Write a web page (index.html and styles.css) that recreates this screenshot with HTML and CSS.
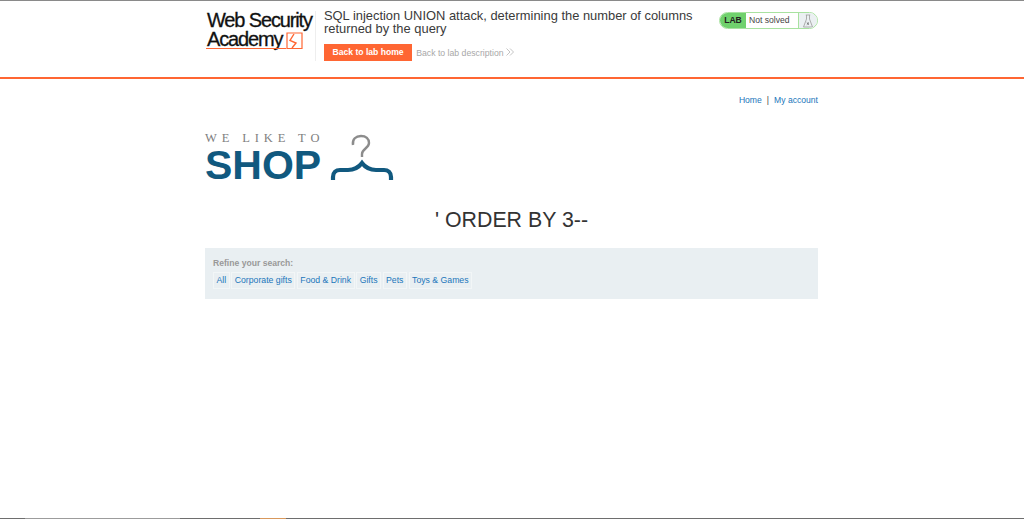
FILE: index.html
```html
<!DOCTYPE html>
<html lang="en">
<head>
    <meta charset="UTF-8">
    <meta name="viewport" content="width=device-width, initial-scale=1.0">
    <title>SQL injection UNION attack</title>
    <link rel="stylesheet" href="styles.css">
</head>
<body>
    <!-- Lab header -->
    <header class="lab-header">
        <div class="lab-inner">
            <div class="academy-logo">
                <span class="academy-line">Web Security</span>
                <span class="academy-line academy-second">Academy
                    <svg class="academy-mark" width="17" height="18" viewBox="0 0 17 18">
                        <path d="M1 2H16V17.500H1Z" fill="none" stroke="#ff6633" stroke-width="1.200"/>
                        <path d="M8 3L4 9.500L10 12L6 17" fill="none" stroke="#ff6633" stroke-width="1.400"/>
                    </svg>
                </span>
                <span class="academy-rule"></span>
            </div>
            <div class="lab-title">
                <h2>SQL injection UNION attack, determining the number of columns returned by the query</h2>
                <div class="lab-links">
                    <a class="lab-home" href="#home">Back to lab home</a>
                    <a class="lab-desc" href="#description">Back to lab description
                        <svg width="8" height="8" viewBox="0 0 8 8"><path d="M.5.5L4 4L.5 7.500M4 .5L7.500 4L4 7.500" fill="none" stroke="#c4c4c4"/></svg>
                    </a>
                </div>
            </div>
            <div class="lab-status">
                <span class="status-lab">LAB</span>
                <span class="status-text">Not solved</span>
                <span class="status-icon">
                    <svg width="10" height="14" viewBox="0 0 10 14">
                        <path d="M3.500 1V5L.5 13H9.500L6.500 5V1M2.800 1H7.200" fill="none" stroke="#a5a5a5" stroke-width=".9"/>
                        <path d="M3.800 8.500L6 10.700M6 8.500L3.800 10.700" fill="none" stroke="#666" stroke-width=".9"/>
                    </svg>
                </span>
            </div>
        </div>
    </header>

    <!-- Shop page -->
    <section class="shop">
        <nav class="account-nav">
            <a href="#home">Home</a><span class="nav-sep">|</span><a href="#account">My account</a>
        </nav>
        <div class="shop-logo">
            <div class="shop-words">
                <span class="shop-small">WE LIKE TO</span>
                <span class="shop-big">SHOP</span>
            </div>
            <svg class="hanger" width="66" height="50" viewBox="0 0 66 50">
                <path d="M23 12C22 6 26 3 31 3C36 3 39 6 39 10C39 15 32 16 32 21V24" fill="none" stroke="#8c8c8c" stroke-width="2.400"/>
                <path d="M3 47V44C3 39.500 6 37 10 37H18C25 37 29 34 32 30C35 34 39 37 46 37H54C58 37 61 39.500 61 44V47" fill="none" stroke="#11597f" stroke-width="4.200"/>
            </svg>
        </div>
        <h1 class="search-title">' ORDER BY 3--</h1>
        <div class="filters">
            <p class="filters-label">Refine your search:</p>
            <ul class="filter-list">
                <li><a href="#all">All</a></li>
                <li><a href="#corporate">Corporate gifts</a></li>
                <li><a href="#food">Food &amp; Drink</a></li>
                <li><a href="#gifts">Gifts</a></li>
                <li><a href="#pets">Pets</a></li>
                <li><a href="#toys">Toys &amp; Games</a></li>
            </ul>
        </div>
    </section>

    <!-- Window edge -->
    <div class="edge">
        <span class="edge-a"></span>
        <span class="edge-b"></span>
        <span class="edge-a edge-c"></span>
        <span class="edge-o"></span>
        <span class="edge-rest"></span>
    </div>
</body>
</html>
```

FILE: styles.css
```css
/* General Styles */
html, body {
    height: 100%;
}

body {
    font-family: "Liberation Sans", Arial, sans-serif;
    margin: 0;
    background-color: #fff;
    color: #333;
    display: flex;
    flex-direction: column;
    box-sizing: border-box;
    border-top: 1px solid #8a8a8a;
    overflow: hidden;
}

a {
    text-decoration: none;
}

/* Lab header */
.lab-header {
    height: 76px;
    border-bottom: 2px solid #ff6633;
    flex: none;
}

.lab-inner {
    width: 613px;
    margin-left: 205px;
    display: flex;
    align-items: flex-start;
}

.academy-logo {
    width: 111px;
    height: 50px;
    margin-top: 10px;
    border-right: 1px solid #eee;
    display: flex;
    flex-direction: column;
    color: #111;
    font-size: 20px;
    line-height: 19px;
    letter-spacing: -1.150px;
    -webkit-text-stroke: 0.3px #111;
    padding-left: 2px;
    box-sizing: border-box;
}

.academy-line {
    display: block;
    white-space: nowrap;
}

.academy-second {
    display: flex;
    align-items: flex-start;
    gap: 4px;
}

.academy-mark {
    margin-top: 1px;
}

.academy-rule {
    width: 80px;
    height: 1px;
    background-color: #ff6633;
    margin: -1px 0 0 -1px;
}

.lab-title {
    width: 385px;
    margin-left: 8px;
}

.lab-title h2 {
    margin: 8px 0 0;
    font-size: 12.900px;
    font-weight: normal;
    line-height: 13px;
    color: #3a3a3a;
}

.lab-links {
    display: flex;
    align-items: center;
    margin-top: 9px;
}

.lab-home {
    background-color: #ff6633;
    color: #fff;
    font-size: 8.600px;
    font-weight: bold;
    padding: 0 8.500px;
    line-height: 17px;
}

.lab-desc {
    color: #a8a8a8;
    font-size: 8.700px;
    margin-left: 4px;
}

.lab-status {
    width: 99px;
    height: 17px;
    margin: 11px 0 0 10px;
    border: 1px solid #a8e2a0;
    border-radius: 9px;
    box-sizing: border-box;
    display: flex;
    align-items: center;
    overflow: hidden;
    font-size: 8.600px;
}

.status-lab {
    width: 26px;
    background-color: #70d16d;
    color: #222;
    font-weight: bold;
    line-height: 15px;
    text-align: center;
}

.status-text {
    width: 53px;
    padding-left: 3px;
    box-sizing: border-box;
    color: #444;
    border-right: 1px solid #a8e2a0;
    line-height: 15px;
}

.status-icon {
    flex: 1;
    height: 15px;
    background-color: #ebf0f2;
    display: flex;
    align-items: center;
    justify-content: center;
}

/* Shop */
.shop {
    width: 613px;
    margin-left: 205px;
    flex: 1;
}

.account-nav {
    text-align: right;
    font-size: 8.600px;
    margin-top: 16px;
    line-height: 11px;
}

.account-nav a {
    color: #1a76bb;
}

.nav-sep {
    margin: 0 5px;
    color: #444;
}

.shop-logo {
    display: flex;
    align-items: flex-start;
    margin-top: 27px;
    height: 51px;
}

.shop-words {
    display: flex;
    flex-direction: column;
    width: 117px;
}

.shop-small {
    font-family: "Liberation Serif", serif;
    font-size: 12.500px;
    letter-spacing: 4.900px;
    line-height: 11px;
    margin-bottom: 3px;
    color: #808080;
    white-space: nowrap;
}

.shop-big {
    font-size: 41px;
    font-weight: bold;
    line-height: 37px;
    color: #11597f;
}

.hanger {
    margin-left: 8px;
}

.search-title {
    margin: 24px 0 0;
    font-size: 21.330px;
    font-weight: normal;
    line-height: 24px;
    text-align: center;
    color: #333;
}

/* Filters */
.filters {
    margin-top: 16px;
    height: 51px;
    padding: 10px 8px;
    background-color: #e9eff2;
    box-sizing: border-box;
}

.filters-label {
    margin: 0;
    font-size: 8.600px;
    font-weight: bold;
    line-height: 11px;
    color: #999;
}

.filter-list {
    list-style-type: none;
    display: flex;
    gap: 1.600px;
    margin: 3px 0 0;
    padding: 0;
}

.filter-list a {
    display: block;
    padding: 0 2.500px;
    border: 1px solid #f2f6f7;
    font-size: 8.700px;
    line-height: 15px;
    color: #1a76bb;
}

/* Window edge */
.edge {
    display: flex;
    height: 1px;
    flex: none;
}

.edge span {
    display: block;
    height: 1px;
}

.edge-a {
    width: 25px;
    background-color: #6e6e6e;
}

.edge-b {
    width: 155px;
    background-color: #9c9c9c;
}

.edge-c {
    width: 80px;
}

.edge-o {
    width: 26px;
    background-color: #d8985c;
}

.edge-rest {
    flex: 1;
    background-color: #6e6e6e;
}
```
